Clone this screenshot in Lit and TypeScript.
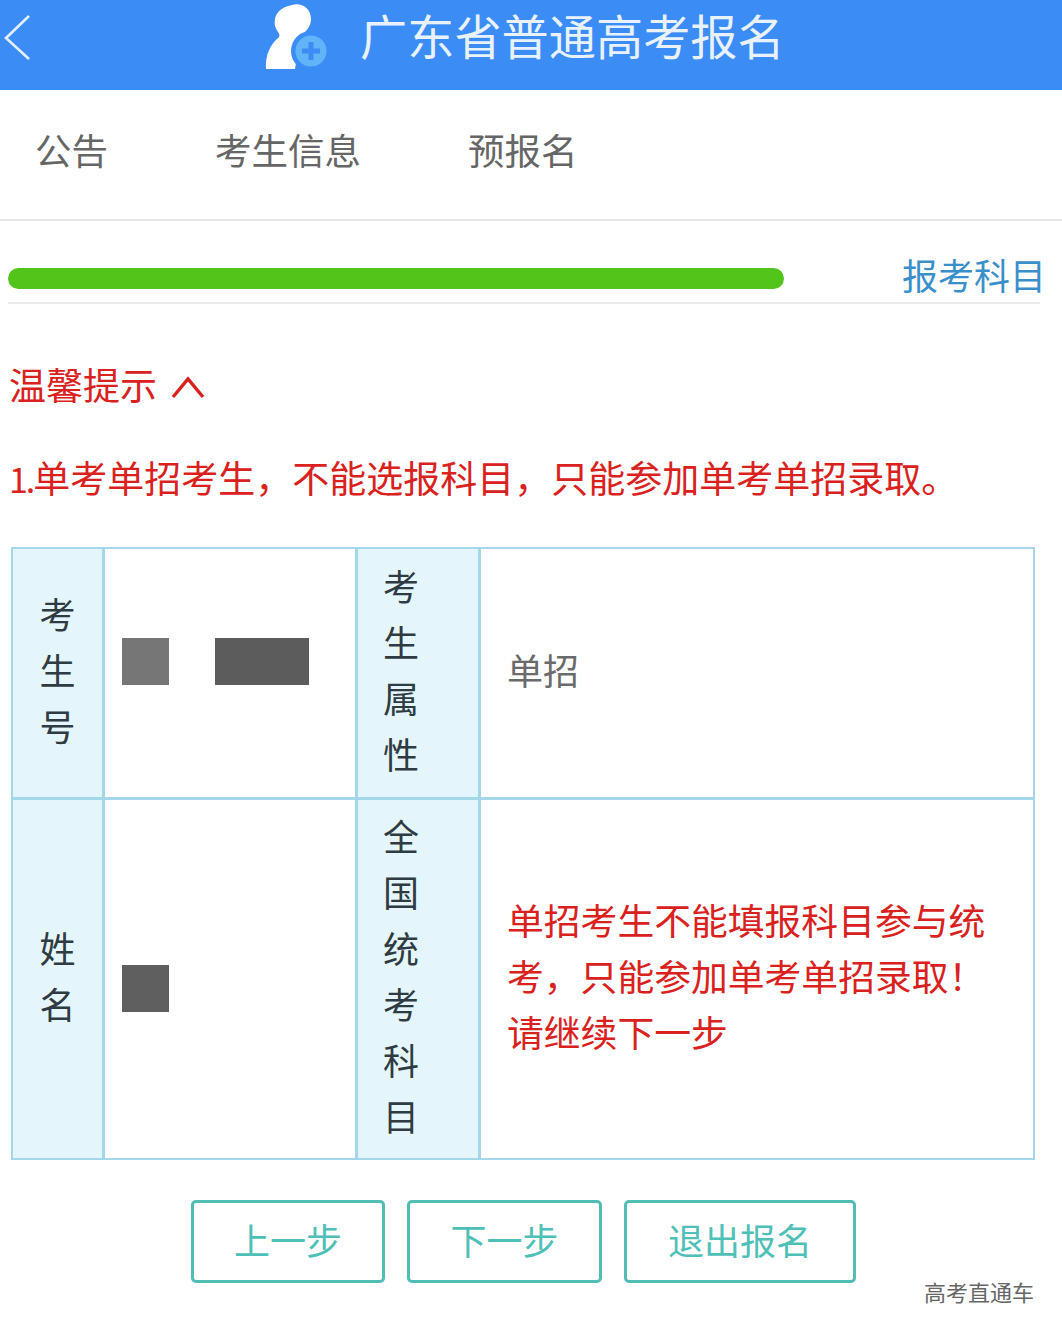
import { LitElement, html, css } from "lit";
import { customElement } from "lit/decorators.js";

@customElement("app-root")
export class AppRoot extends LitElement {
  static styles = css`
    :host {
      display: block;
      width: 1062px;
      height: 1333px;
      overflow: hidden;
      background: #fff;
      font-family: "Noto Sans CJK SC", "Noto Sans", sans-serif;
      font-weight: 400;
      font-size: 36px;
      color: #666;
    }
    .header {
      height: 90px;
      background: #3b8cf5;
      display: flex;
      align-items: center;
      padding-left: 4px;
      box-sizing: border-box;
    }
    .back { width: 28px; height: 46px; flex: none; margin-top: -16px; }
    .person { width: 70px; height: 70px; flex: none; margin-left: 232px; margin-top: -18px; }
    .title {
      margin-left: 26px;
      font-size: 47.2px;
      line-height: 60px;
      color: #e8f2fe;
      margin-top: -21px;
      white-space: nowrap;
    }
    .tabs {
      display: flex;
      align-items: center;
      padding: 0 0 10px 35px;
      box-sizing: content-box;
      height: 119px;
      gap: 107px;
      border-bottom: 2px solid #e6e6e6;
      font-size: 36.5px;
      color: #666;
      margin-bottom: 42px;
    }
    .tabs span { white-space: nowrap; }
    .progress-row {
      display: flex;
      align-items: center;
      height: 39px;
      margin: 0 22px 0 8px;
      border-bottom: 2px solid #e9e9e9;
    }
    .bar {
      width: 776px;
      height: 21px;
      border-radius: 11px;
      background: #52c41a;
      margin-top: -9px;
    }
    .step {
      margin-left: auto;
      margin-right: -6px;
      color: #3a8fcb;
      font-size: 36px;
      line-height: 44px;
      margin-top: -18px;
      white-space: nowrap;
    }
    .tip-head {
      display: flex;
      align-items: center;
      color: #d9211d;
      margin: 54px 0 0 9px;
      height: 52px;
      line-height: 52px;
      font-size: 37px;
      gap: 14px;
    }
    .chev { width: 34px; height: 24px; margin-top: 6px; }
    .tip {
      color: #d9211d;
      margin: 41px 0 0 9px;
      font-size: 37px;
      line-height: 52px;
      white-space: nowrap;
    }
    .num { font-size: 34px; letter-spacing: -2px; }
    .table {
      margin: 42px 0 0 11px;
      width: 1024px;
      box-sizing: border-box;
      border: 2px solid #a4d7ea;
      display: grid;
      grid-template-columns: 89px 253px 123px 1fr;
      grid-template-rows: 248px 361px;
    }
    .cell {
      display: flex;
      align-items: center;
      border-left: 3px solid #a4d7ea;
      border-top: 3px solid #a4d7ea;
      box-sizing: border-box;
      min-width: 0;
    }
    .r1 { border-top: 0; }
    .c1 { border-left: 0; }
    .label {
      background: #e4f6fc;
      justify-content: center;
      color: #2f3b42;
      line-height: 56px;
      padding-bottom: 8px;
    }
    .label.shift { justify-content: flex-start; padding-left: 25px; }
    .label div { width: 36px; text-align: center; }
    .value { padding-left: 17px; gap: 46px; }
    .value.up { padding-bottom: 24px; }
    .value.down { padding-top: 18px; }
    .block { width: 47px; height: 47px; background: #5f5f5f; }
    .block.light { background: #767676; }
    .block.wide { width: 94px; background: #5c5c5c; }
    .text { padding: 0 0 9px 26px; color: #6b6b6b; }
    .warn {
      color: #d9211d;
      font-size: 36.8px;
      line-height: 56px;
      padding: 0 40px 8px 26px;
    }
    .buttons {
      display: flex;
      gap: 22px;
      margin: 40px 0 0 191px;
    }
    .btn {
      height: 83px;
      width: 194px;
      box-sizing: border-box;
      border: 3px solid #52bdb5;
      border-radius: 5px;
      display: flex;
      align-items: center;
      justify-content: center;
      color: #4fc0b8;
      font-size: 36px;
      padding-bottom: 6px;
      white-space: nowrap;
    }
    .btn.mid { width: 195px; }
    .btn.long { width: 232px; }
    .mark {
      margin: -5px 28px 0 0;
      text-align: right;
      font-size: 22px;
      line-height: 26px;
      color: #666;
    }
  `;

  render() {
    return html`
      <div class="header">
        <svg class="back" viewBox="0 0 28 46" fill="none" stroke="#e3effe" stroke-width="2.6">
          <path d="M25 2 L2 24 L25 45" />
        </svg>
        <svg class="person" viewBox="0 0 70 70">
          <path fill="#fff" d="M28 4c9-3 19 3 19 14 0 7-4 11-7 14-3 2-3 4 0 6-7 6-9 16-8 24l-1 6H2c-1-13 4-24 11-30 3-2 3-4 1-7-3-4-4-8-3-13 1-6 6-12 17-14z"/>
          <circle cx="47" cy="50" r="20" fill="#3b8cf5"/>
          <circle cx="47" cy="50" r="15.5" fill="#62b4f8"/>
          <path fill="none" stroke="#3b8cf5" stroke-width="5" d="M47 41v18M38 50h18"/>
        </svg>
        <div class="title">广东省普通高考报名</div>
      </div>
      <div class="tabs">
        <span>公告</span><span>考生信息</span><span>预报名</span>
      </div>
      <div class="progress-row">
        <div class="bar"></div>
        <div class="step">报考科目</div>
      </div>
      <div class="tip-head">
        <span>温馨提示</span>
        <svg class="chev" viewBox="0 0 34 24" fill="none" stroke="#d9211d" stroke-width="3.4">
          <path d="M2 22 L17 4 L32 22" />
        </svg>
      </div>
      <div class="tip"><span class="num">1.</span>单考单招考生，不能选报科目，只能参加单考单招录取。</div>
      <div class="table">
        <div class="cell label r1 c1"><div>考生号</div></div>
        <div class="cell value up r1">
          <div class="block light"></div><div class="block wide"></div>
        </div>
        <div class="cell label shift r1"><div>考生属性</div></div>
        <div class="cell text r1">单招</div>
        <div class="cell label c1"><div>姓名</div></div>
        <div class="cell value down"><div class="block"></div></div>
        <div class="cell label shift"><div>全国统考科目</div></div>
        <div class="cell warn">单招考生不能填报科目参与统考，只能参加单考单招录取！请继续下一步</div>
      </div>
      <div class="buttons">
        <div class="btn">上一步</div>
        <div class="btn mid">下一步</div>
        <div class="btn long">退出报名</div>
      </div>
      <div class="mark">高考直通车</div>
    `;
  }
}
